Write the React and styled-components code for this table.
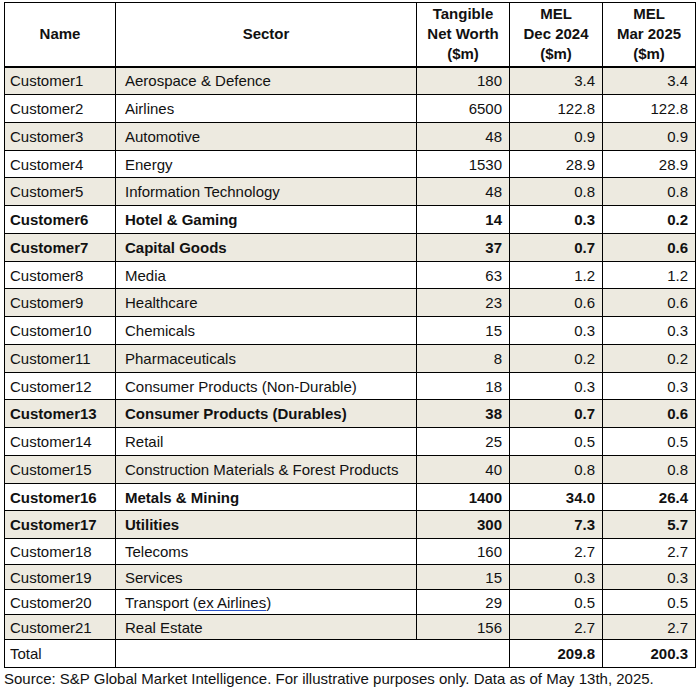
import React from "react";
import styled, { createGlobalStyle } from "styled-components";

const Global = createGlobalStyle`
  html, body { margin: 0; padding: 0; background: #fff; }
  body { font-family: "Liberation Sans", Arial, sans-serif; color: #111; }
`;

const Page = styled.div`
  padding: 2px 0 0 4px;
  width: 697px;
  box-sizing: border-box;
`;

const Table = styled.table`
  border-collapse: collapse;
  table-layout: fixed;
  width: 691px;
  font-size: 15px;
  line-height: 17px;
`;

const HeadCell = styled.th`
  border: 1px solid #000;
  border-bottom: 2px solid #000;
  font-weight: bold;
  text-align: center;
  vertical-align: middle;
  line-height: 20px;
  padding: 0 2px;
`;

const Row = styled.tr`
  height: ${(p) => p.$h}px;
  background: ${(p) => (p.$shaded ? "#EDEAE0" : "#fff")};
  font-weight: ${(p) => (p.$bold ? "bold" : "normal")};
`;

const Cell = styled.td`
  border: 1px solid #000;
  padding: 0 ${(p) => (p.$num ? "7px" : "4px")} 0 ${(p) => (p.$sector ? "9px" : "5px")};
  text-align: ${(p) => (p.$num ? "right" : "left")};
  vertical-align: middle;
  white-space: nowrap;
  font-weight: ${(p) => (p.$bold ? "bold" : "inherit")};
`;

const Underlined = styled.span`
  text-decoration: underline;
  text-decoration-color: #2b55c9;
  text-underline-offset: 2px;
`;

const Source = styled.div`
  font-size: 15px;
  line-height: 19px;
  margin-top: 1px;
`;

const rows = [
  ["Customer1", "Aerospace & Defence", "180", "3.4", "3.4"],
  ["Customer2", "Airlines", "6500", "122.8", "122.8"],
  ["Customer3", "Automotive", "48", "0.9", "0.9"],
  ["Customer4", "Energy", "1530", "28.9", "28.9"],
  ["Customer5", "Information Technology", "48", "0.8", "0.8"],
  ["Customer6", "Hotel & Gaming", "14", "0.3", "0.2", true],
  ["Customer7", "Capital Goods", "37", "0.7", "0.6", true],
  ["Customer8", "Media", "63", "1.2", "1.2"],
  ["Customer9", "Healthcare", "23", "0.6", "0.6"],
  ["Customer10", "Chemicals", "15", "0.3", "0.3"],
  ["Customer11", "Pharmaceuticals", "8", "0.2", "0.2"],
  ["Customer12", "Consumer Products (Non-Durable)", "18", "0.3", "0.3"],
  ["Customer13", "Consumer Products (Durables)", "38", "0.7", "0.6", true],
  ["Customer14", "Retail", "25", "0.5", "0.5"],
  ["Customer15", "Construction Materials & Forest Products", "40", "0.8", "0.8"],
  ["Customer16", "Metals & Mining", "1400", "34.0", "26.4", true],
  ["Customer17", "Utilities", "300", "7.3", "5.7", true],
  ["Customer18", "Telecoms", "160", "2.7", "2.7"],
  ["Customer19", "Services", "15", "0.3", "0.3"],
  ["Customer20", "TRANSPORT", "29", "0.5", "0.5"],
  ["Customer21", "Real Estate", "156", "2.7", "2.7"],
];

const heights = [28, 28, 28, 27, 28, 28, 28, 27, 28, 28, 28, 27, 28, 28, 28, 27, 28, 26, 25, 25, 25];

export default function App() {
  return (
    <Page>
      <Global />
      <Table>
        <colgroup>
          <col style={{ width: 111 }} />
          <col style={{ width: 301 }} />
          <col style={{ width: 93 }} />
          <col style={{ width: 93 }} />
          <col style={{ width: 93 }} />
        </colgroup>
        <thead>
          <Row $h={64}>
            <HeadCell>Name</HeadCell>
            <HeadCell>Sector</HeadCell>
            <HeadCell>Tangible<br />Net Worth<br />($m)</HeadCell>
            <HeadCell>MEL<br />Dec 2024<br />($m)</HeadCell>
            <HeadCell>MEL<br />Mar 2025<br />($m)</HeadCell>
          </Row>
        </thead>
        <tbody>
          {rows.map((r, i) => (
            <Row key={r[0]} $h={heights[i]} $shaded={i % 2 === 0} $bold={!!r[5]}>
              <Cell>{r[0]}</Cell>
              <Cell $sector>
                {r[1] === "TRANSPORT" ? (
                  <>Transport (<Underlined>ex Airlines</Underlined>)</>
                ) : (
                  r[1]
                )}
              </Cell>
              <Cell $num>{r[2]}</Cell>
              <Cell $num>{r[3]}</Cell>
              <Cell $num>{r[4]}</Cell>
            </Row>
          ))}
          <Row $h={28}>
            <Cell>Total</Cell>
            <Cell colSpan={2} />
            <Cell $num $bold>209.8</Cell>
            <Cell $num $bold>200.3</Cell>
          </Row>
        </tbody>
      </Table>
      <Source>
        Source: S&amp;P Global Market Intelligence. For illustrative purposes only. Data as of May 13th, 2025.
      </Source>
    </Page>
  );
}
